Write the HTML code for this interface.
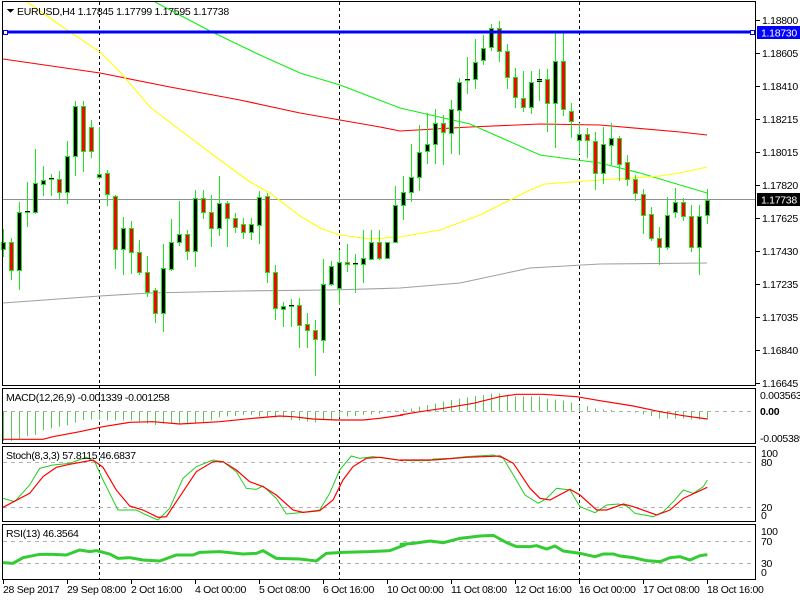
<!DOCTYPE html>
<html><head><meta charset="utf-8"><style>
html,body{margin:0;padding:0;background:#fff;width:800px;height:600px;overflow:hidden}
svg{display:block;font-family:"Liberation Sans",sans-serif;font-size:11px}
.sm{font-size:10.5px;letter-spacing:-0.3px}
</style></head><body>
<svg id="s" width="800" height="600" xmlns="http://www.w3.org/2000/svg" shape-rendering="crispEdges">
<rect width="800" height="600" fill="#fff"/>
<g id="bg"></g>
<g id="lines"></g>
<g id="candles"></g>
<g fill="none" stroke="#000" stroke-width="1">
<rect x="2.5" y="1.5" width="753" height="384"/>
<rect x="2.5" y="388.5" width="753" height="55"/>
<rect x="2.5" y="446.5" width="753" height="75"/>
<rect x="2.5" y="524.5" width="753" height="55"/>
</g>
<line x1="3" y1="32" x2="755" y2="32" stroke="#0000ff" stroke-width="3"/>
<rect x="3.5" y="30.5" width="4" height="4" fill="#fff" stroke="#0000ff"/>
<rect x="750.5" y="30.5" width="4" height="4" fill="#fff" stroke="#0000ff"/>
<path d="M7 9 L14 9 L10.5 13 Z" fill="#000"/>
<text x="17" y="15" fill="#000" class="sm">EURUSD,H4  1.17845 1.17799 1.17595 1.17738</text>
<text x="6" y="401" fill="#000" class="sm">MACD(12,26,9) -0.001339 -0.001258</text>
<text x="6" y="459" fill="#000" class="sm">Stoch(8,3,3) 57.8115 46.6837</text>
<text x="6" y="537" fill="#000" class="sm">RSI(13) 46.3564</text>
<g id="scale" fill="#000" class="sm"></g>
<rect x="757" y="26" width="43" height="13" fill="#0000ff"/>
<text x="761" y="36.5" fill="#fff" class="sm">1.18730</text>
<rect x="757" y="193" width="43" height="13" fill="#000"/>
<text x="761" y="203.5" fill="#fff" class="sm">1.17738</text>
<g fill="#000" class="sm">
<text x="760" y="399">0.003563</text>
<text x="760" y="415" font-weight="bold">0.00</text>
<text x="760" y="442">-0.005389</text>
<text x="761" y="457">100</text><text x="761" y="466">80</text>
<text x="761" y="511">20</text><text x="761" y="519">0</text>
<text x="761" y="535">100</text><text x="761" y="545">70</text>
<text x="761" y="567">30</text><text x="761" y="576">0</text>
</g>
<g fill="#000" class="sm">
<text x="3" y="593">28 Sep 2017</text>
<text x="67" y="593">29 Sep 08:00</text>
<text x="131" y="593">2 Oct 16:00</text>
<text x="195" y="593">4 Oct 00:00</text>
<text x="259" y="593">5 Oct 08:00</text>
<text x="323" y="593">6 Oct 16:00</text>
<text x="387" y="593">10 Oct 00:00</text>
<text x="451" y="593">11 Oct 08:00</text>
<text x="515" y="593">12 Oct 16:00</text>
<text x="579" y="593">16 Oct 00:00</text>
<text x="643" y="593">17 Oct 08:00</text>
<text x="707" y="593">18 Oct 16:00</text>
</g>
<g id="ticks" stroke="#000"></g>
</svg>
<script>
var NS="http://www.w3.org/2000/svg";
function el(p,t,a){var e=document.createElementNS(NS,t);for(var k in a)e.setAttribute(k,a[k]);document.getElementById(p).appendChild(e);return e;}
function pl(p,pts,col,w,dash){el(p,"polyline",{points:pts.map(function(q){return q[0]+","+q[1]}).join(" "),fill:"none",stroke:col,"stroke-width":w||1,"stroke-dasharray":dash||"","shape-rendering":"auto"});}
[99,339,579].forEach(function(x){el("bg","line",{x1:x+.5,y1:2,x2:x+.5,y2:580,stroke:"#000","stroke-dasharray":"3,3"});});
[411,462,507,541,563].forEach(function(y){el("bg","line",{x1:3,y1:y+.5,x2:755,y2:y+.5,stroke:"#b4b4b4","stroke-dasharray":"4,4"});});
el("bg","line",{x1:3,y1:199.5,x2:755,y2:199.5,stroke:"#8a9296"});
pl("lines",[[3,59],[100,73],[170,87],[240,100],[300,113],[380,127],[400,131],[470,127],[540,124],[600,125],[680,132],[707,135]],"#ff0000",1.1);
pl("lines",[[155,2],[210,31],[260,55],[300,73],[340,85],[400,108],[470,124],[540,155],[600,163],[640,173],[670,182],[707,193]],"#11ee11",1.1);
pl("lines",[[27,2],[67,30],[100,52],[120,72],[150,107],[180,130],[220,160],[250,182],[270,193],[300,216],[320,228],[340,235],[370,239],[400,237],[440,230],[480,215],[530,190],[545,184],[600,180],[660,176],[680,173],[707,167]],"#ffff00",1.1);
pl("lines",[[3,303],[100,296],[150,293],[240,291],[330,290],[400,288],[460,283],[530,268],[600,264],[707,263]],"#a0a0a0",1.1);
var C=[[1,242,249,229,256],[0,242,270,238,279],[1,212,270,202,289],[1,212,212,182,226],[1,183,212,149,213],[1,180,184,166,195],[1,179,179,174,195],[0,179,192,171,198],[1,156,192,141,203],[1,106,156,101,175],[0,106,151,101,171],[0,127,151,120,157],[1,174,177,127,178],[0,173,194,170,205],[0,196,249,195,268],[1,228,249,217,274],[0,228,252,221,273],[0,252,272,240,274],[0,272,292,256,296],[0,290,313,288,322],[1,268,313,244,331],[1,242,269,219,270],[1,234,242,201,245],[0,234,251,230,259],[1,198,251,190,266],[0,198,212,190,218],[0,212,228,195,246],[1,203,228,176,235],[0,203,218,201,246],[0,218,227,213,232],[0,224,232,218,238],[1,224,232,218,239],[1,197,225,191,243],[0,196,272,193,282],[0,272,308,265,319],[1,306,309,302,326],[1,306,306,299,326],[0,305,325,298,347],[0,324,330,313,347],[0,330,339,320,375],[1,284,340,259,352],[1,266,284,261,285],[1,262,288,250,304],[0,262,264,244,271],[1,264,264,254,292],[1,258,264,230,282],[1,242,259,230,259],[0,242,258,230,259],[1,242,258,242,258],[1,205,242,186,242],[1,192,205,176,219],[1,177,192,144,201],[1,152,177,125,190],[1,144,151,113,163],[1,123,144,109,163],[0,123,132,115,164],[1,109,133,100,153],[1,82,110,78,154],[1,80,80,57,93],[1,62,79,39,88],[1,48,60,35,64],[1,28,47,24,50],[0,28,51,21,61],[0,51,77,44,88],[0,77,97,68,107],[0,98,107,71,111],[1,82,107,71,113],[1,80,81,69,100],[0,79,103,69,131],[1,61,103,31,147],[0,61,109,31,115],[0,111,121,103,137],[1,134,140,123,153],[0,134,140,128,157],[0,141,173,132,189],[1,144,173,127,183],[1,138,145,123,164],[0,138,164,136,180],[0,162,179,155,185],[0,179,193,175,200],[0,194,215,189,233],[0,214,238,207,240],[0,238,247,227,264],[1,215,247,197,249],[1,202,212,188,217],[0,202,216,198,220],[0,216,247,205,251],[1,216,247,205,274],[1,200,215,189,223]];
var G="#22e522";
C.forEach(function(c,i){var x=3+8*i;
 el("candles","line",{x1:x+.5,y1:c[3],x2:x+.5,y2:c[4]+1,stroke:G});
 if(c[2]-c[1]<2){el("candles","rect",{x:x-2,y:c[1]-1,width:5,height:Math.max(2,c[2]-c[1]+2),fill:c[0]?"#000":"#f00"});el("candles","line",{x1:x-2,y1:c[1]+.5,x2:x+3,y2:c[1]+.5,stroke:G});}
 else el("candles","rect",{x:x-1.5,y:c[1]+.5,width:4,height:c[2]-c[1],fill:c[0]?"#000":"#f00",stroke:G});
});
[["1.18800",20],["1.18605",53],["1.18410",86],["1.18215",119],["1.18015",152],["1.17820",185],["1.17625",218],["1.17430",251],["1.17235",284],["1.17035",317],["1.16840",350],["1.16645",383]].forEach(function(a){
 el("ticks","line",{x1:756,y1:a[1]+.5,x2:760,y2:a[1]+.5});
 var t=el("scale","text",{x:762,y:a[1]+4});t.textContent=a[0];});
[3,67,131,195,259,323,387,451,515,579,643,707].forEach(function(x){el("ticks","line",{x1:x+.5,y1:580,x2:x+.5,y2:584});});
var H3=[183,183,175,168,165,150,145,140,136,128,120,118,118,122,122,122,122,128,130,135,130,130,133,133,130,128,122,113,110,108,105,105,110,110,113,112,120,122,125,127,120,118,112,110,108,105,103,100,96,92];
var H4=[88,85,80,75,70,65,60,55,52,48,45,40,40,45,50,50,50,50,55,58,62,68,75,78,85,88,90,93,93,98,103,108,115,115,115,115,118,118,118];
var hs=[];H3.forEach(function(v){hs.push(380+v/3)});H4.forEach(function(v){hs.push(380+v/3)});
hs.forEach(function(y,i){var x=3+8*i;if(x>707)return;el("lines","line",{x1:x+.5,y1:411,x2:x+.5,y2:y,stroke:"#55cc55"});});
function cv(a,off){return a.map(function(q){return[q[0]/3+off,380+q[1]/3]});}
pl("lines",cv([[0,178],[120,178],[150,170],[230,155],[300,140],[380,127],[450,125],[530,132],[650,125],[750,115],[830,108],[870,110],[930,117],[1000,120],[1080,120],[1130,115],[1200,105]],3).concat(cv([[0,105],[60,95],[130,85],[220,70],[300,50],[350,43],[430,43],[530,50],[600,62],[700,78],[780,95],[850,107],[922,117]],400)),"#ff0000",1.2);
pl("lines",cv([[0,355],[35,365],[80,315],[110,265],[150,255],[200,250],[250,232],[275,245],[300,300],[345,390],[400,390],[430,405],[465,420],[500,385],[540,295],[580,260],[630,240],[660,245],[700,275],[730,325],[760,328],[780,318],[820,355],[850,402],[900,397],[950,390],[980,340],[1010,270],[1045,228],[1070,235],[1110,230],[1150,235],[1200,242]],3).concat(cv([[0,240],[30,242],[90,242],[100,237],[150,235],[200,230],[280,225],[310,235],[340,285],[375,345],[415,370],[440,355],[470,325],[510,330],[540,380],[585,398],[620,375],[655,372],[680,378],[705,400],[760,410],[790,395],[820,365],[850,330],[880,340],[910,320],[922,300]],400)),"#22cc22",1);
pl("lines",cv([[0,382],[80,340],[120,290],[160,262],[200,253],[270,240],[300,262],[340,330],[380,378],[420,390],[465,412],[490,410],[530,350],[580,275],[630,245],[660,245],[700,270],[740,305],[780,320],[820,345],[870,390],[900,397],[950,392],[990,360],[1020,300],[1050,260],[1090,235],[1130,232],[1200,242]],3).concat(cv([[0,240],[100,240],[200,232],[300,228],[340,250],[390,325],[420,355],[450,360],[510,328],[540,345],[590,390],[620,390],[670,372],[700,380],[770,405],[810,390],[850,355],[922,322]],400)),"#ff0000",1.2);
pl("lines",cv([[0,548],[30,550],[60,533],[110,523],[150,523],[190,525],[230,510],[260,515],[280,512],[320,522],[345,535],[380,533],[420,540],[470,543],[520,525],[570,525],[590,517],[650,515],[720,522],[760,520],[780,512],[820,535],[890,537],[940,543],[970,520],[1020,517],[1100,515],[1160,512],[1200,497]],3).concat(cv([[0,493],[40,490],[90,483],[130,488],[180,475],[240,468],[280,466],[320,488],[350,500],[390,500],[410,497],[440,507],[465,498],[490,513],[540,520],[585,530],[610,522],[640,522],[660,528],[700,533],[740,542],[780,545],[810,533],[840,530],[870,540],[900,527],[922,524]],400)),"#33cc33",3);
</script>
</body></html>
